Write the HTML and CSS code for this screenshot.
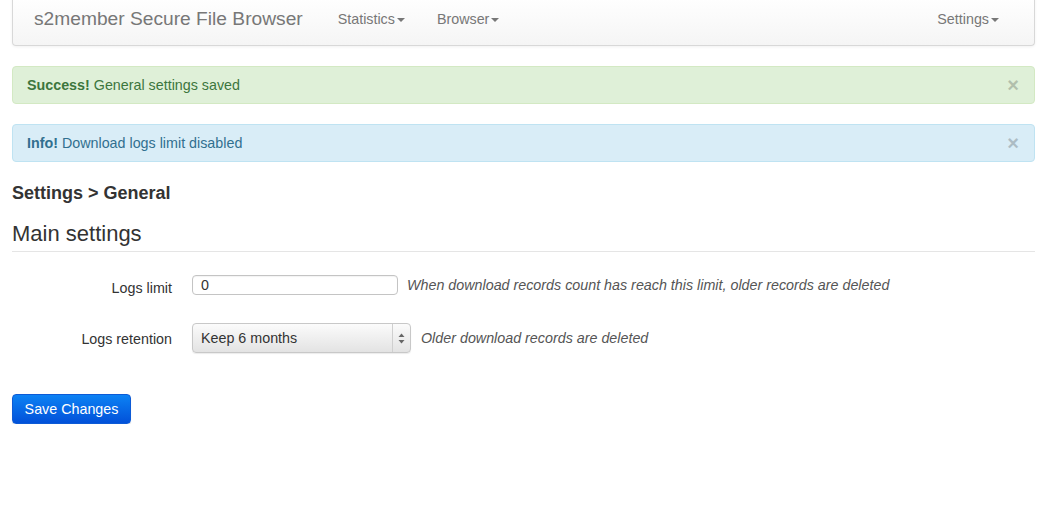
FILE: index.html
```html
<!DOCTYPE html>
<html>
<head>
<meta charset="utf-8">
<title>s2member Secure File Browser</title>
<link rel="stylesheet" href="styles.css">
</head>
<body>
<div class="page">
  <nav class="navbar">
    <span class="brand">s2member Secure File Browser</span>
    <ul class="nav">
      <li>Statistics<span class="caret"></span></li>
      <li>Browser<span class="caret"></span></li>
    </ul>
    <ul class="nav nav-right">
      <li>Settings<span class="caret"></span></li>
    </ul>
  </nav>

  <div class="alert alert-success">
    <span><strong>Success!</strong> General settings saved</span>
    <span class="close">×</span>
  </div>
  <div class="alert alert-info">
    <span><strong>Info!</strong> Download logs limit disabled</span>
    <span class="close">×</span>
  </div>

  <h4 class="crumb">Settings &gt; General</h4>
  <h3 class="legend">Main settings</h3>

  <form class="form">
    <div class="row">
      <label class="label">Logs limit</label>
      <input class="input" type="text" value="0">
      <span class="help">When download records count has reach this limit, older records are deleted</span>
    </div>
    <div class="row row-select">
      <label class="label">Logs retention</label>
      <div class="select">
        <span class="select-value">Keep 6 months</span>
        <span class="select-arrows">
          <svg width="7" height="11" viewBox="0 0 7 11"><path d="M3.5 0.5 L6.5 4 L0.5 4 Z" fill="#666"/><path d="M0.5 7 L6.5 7 L3.5 10.5 Z" fill="#666"/></svg>
        </span>
      </div>
      <span class="help">Older download records are deleted</span>
    </div>
    <div class="actions">
      <button type="button" class="btn-primary">Save Changes</button>
    </div>
  </form>
</div>
</body>
</html>
```

FILE: styles.css
```css
* { box-sizing: border-box; }
html, body { margin: 0; padding: 0; background: #fff; }
body {
  font-family: "Liberation Sans", Arial, sans-serif;
  font-size: 14.3px;
  line-height: 20px;
  color: #333;
}
.page {
  padding: 0 14px 0 12px;
}
.navbar {
  display: flex;
  align-items: center;
  height: 50px;
  margin-top: -4px;
  padding: 4px 0 0 21px;
  background: linear-gradient(#ffffff, #f5f5f5);
  border: 1px solid #d8d8d8;
  border-top: none;
  border-radius: 0 0 4px 4px;
  box-shadow: 0 1px 3px rgba(0,0,0,0.06);
}
.brand {
  font-size: 19.2px;
  color: #777;
  margin-top: -8px;
}
.nav {
  display: flex;
  list-style: none;
  margin: -8px 0 0 35px;
  padding: 0;
  gap: 32px;
}
.nav li {
  color: #777;
  font-size: 14.3px;
}
.nav-right {
  margin-left: auto;
  margin-right: 35px;
}
.caret {
  display: inline-block;
  width: 0;
  height: 0;
  margin-left: 2px;
  vertical-align: middle;
  border-top: 4px solid #777;
  border-left: 4px solid transparent;
  border-right: 4px solid transparent;
}
.alert {
  display: flex;
  justify-content: space-between;
  align-items: center;
  height: 38px;
  padding: 0 14px 0 14px;
  border: 1px solid;
  border-radius: 4px;
  margin-top: 20px;
}
.alert strong { font-weight: bold; }
.alert-success {
  background: #dff0d8;
  border-color: #d3e9c3;
  color: #3c763d;
  margin-top: 20px;
}
.alert-info {
  background: #d9edf7;
  border-color: #bfe3f2;
  color: #31708f;
}
.close {
  font-size: 20px;
  font-weight: bold;
  color: #000;
  opacity: 0.2;
  margin-right: 1px;
}
.crumb {
  font-size: 18px;
  font-weight: bold;
  margin: 20px 0 0 0;
  line-height: 22px;
}
.legend {
  font-size: 22px;
  font-weight: normal;
  margin: 18px 0 0 0;
  line-height: 24px;
  padding-bottom: 5px;
  border-bottom: 1px solid #e5e5e5;
}
.form {
  margin-top: 20px;
}
.row {
  display: flex;
  align-items: center;
}
.row-select {
  margin-top: 25px;
}
.label {
  width: 160px;
  text-align: right;
  padding-top: 6px;
  margin-right: 20px;
}
.row-select .label { padding-top: 2px; }
.input {
  width: 206px;
  height: 20px;
  border: 1px solid #c4c4c4;
  border-radius: 4px;
  padding: 0 8px;
  font-family: inherit;
  font-size: 14.3px;
  color: #333;
  box-shadow: inset 0 1px 1px rgba(0,0,0,0.05);
  outline: none;
}
.help {
  font-style: italic;
  color: #555;
  margin-left: 9px;
}
.select {
  display: flex;
  width: 219px;
  height: 30px;
  border: 1px solid #c8c8c8;
  border-radius: 4px;
  background: linear-gradient(#fbfbfb, #e3e3e3);
  box-shadow: 0 1px 1px rgba(0,0,0,0.08);
}
.select-value {
  flex: 1;
  padding: 4px 0 0 8px;
  color: #333;
}
.select-arrows {
  width: 18px;
  border-left: 1px solid #cfcfcf;
  display: flex;
  align-items: center;
  justify-content: center;
}
.row-select .help { margin-left: 10px; }
.actions {
  margin-top: 41px;
}
.btn-primary {
  width: 119px;
  height: 30px;
  border: 1px solid #0d5bd6;
  border-radius: 4px;
  background: linear-gradient(#0c82f4, #0251d9);
  color: #fff;
  font-family: inherit;
  font-size: 14.3px;
  padding: 0;
  box-shadow: 0 1px 1px rgba(0,0,0,0.15);
}
```
